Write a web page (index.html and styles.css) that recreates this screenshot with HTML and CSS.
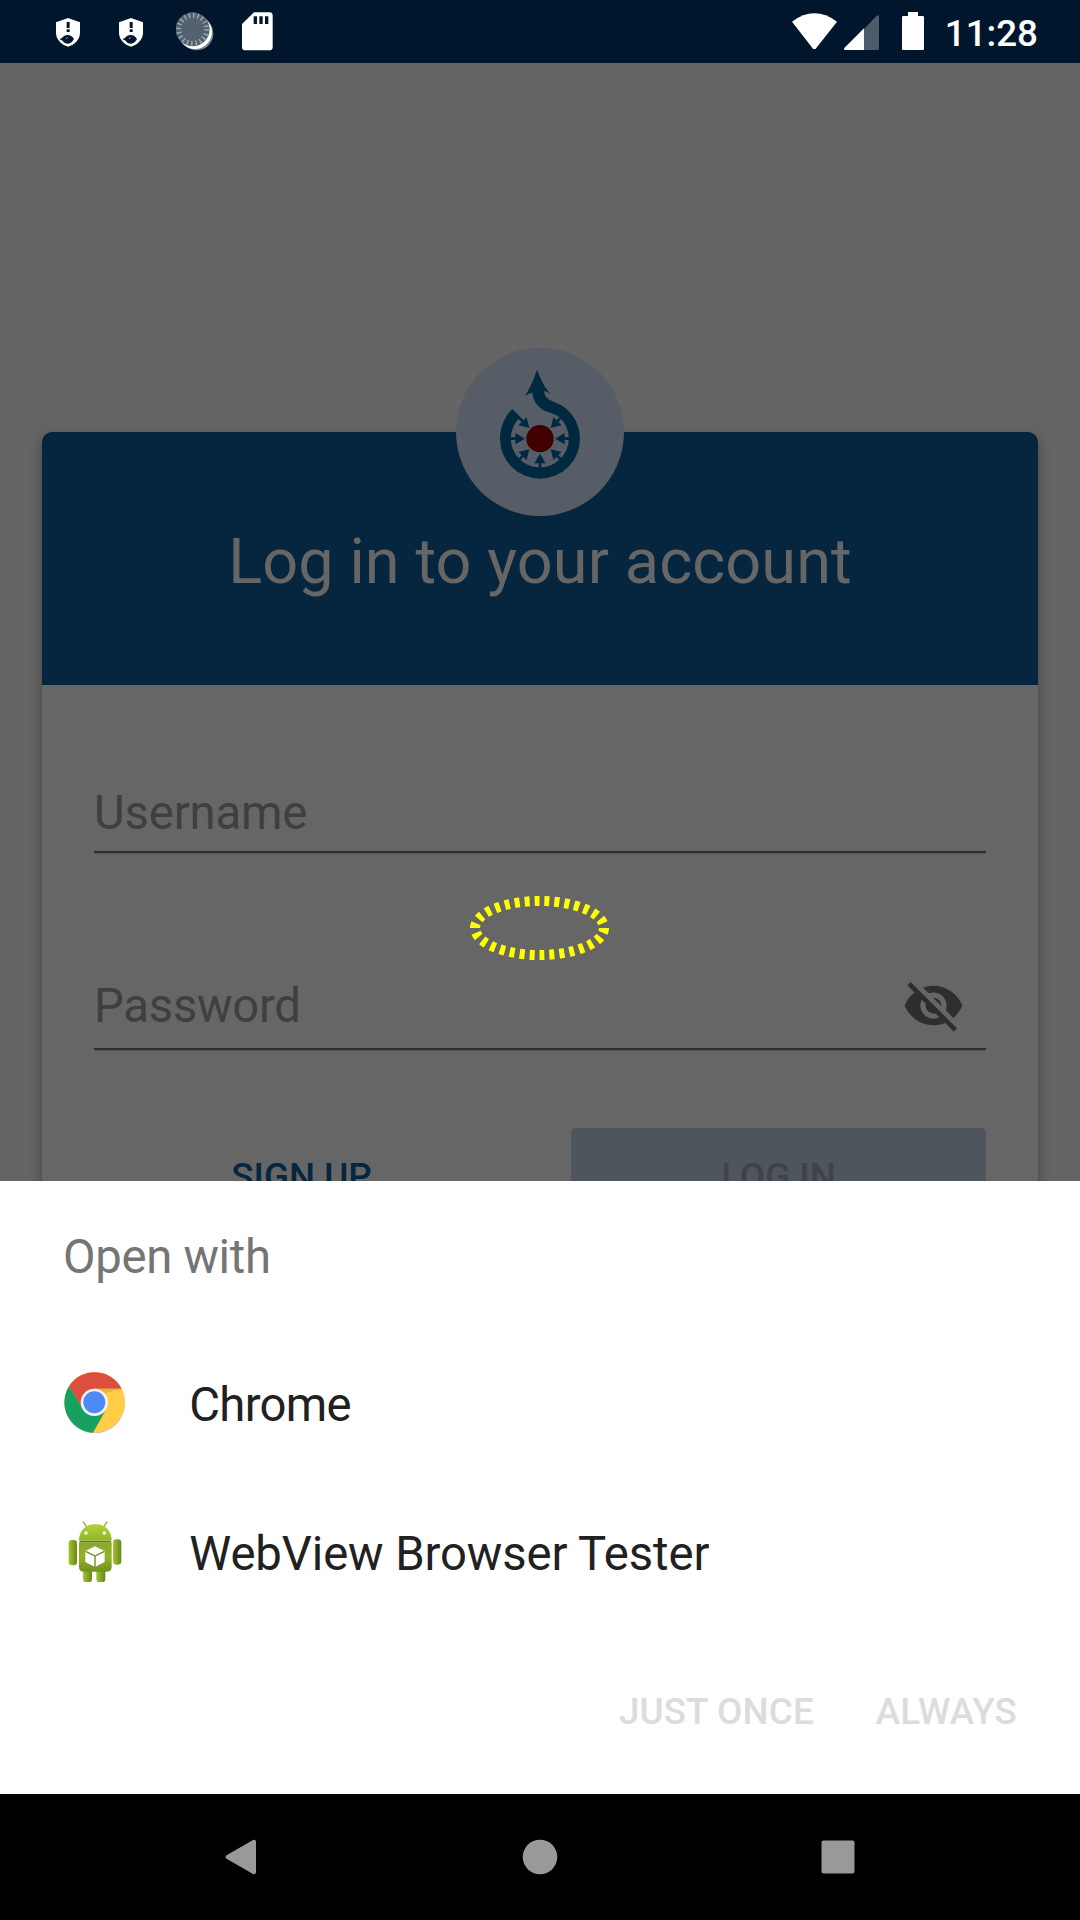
FILE: index.html
```html
<!DOCTYPE html>
<html lang="en">
<head>
<meta charset="utf-8">
<title>Log in</title>
<link rel="stylesheet" href="styles.css">
</head>
<body>
<div class="screen">
  <header class="status">
    <div class="notifications">
      <svg class="shield" viewBox="168 54 72 86"><path fill="#fff" d="M204 54L240 67V98C240 118 224 134 204 140C184 134 168 118 168 98V67Z"/><path fill="#00162c" d="M200 66h9v18h-9zM200 88h9v8h-9zM178 117l8-3c8-12 28-12 36 3-4 8-10 13-18 14-7 0-13-3-16-9z"/><path stroke="#fff" stroke-width="2" d="M198 117l5-5"/></svg>
      <svg class="shield" viewBox="168 54 72 86"><path fill="#fff" d="M204 54L240 67V98C240 118 224 134 204 140C184 134 168 118 168 98V67Z"/><path fill="#00162c" d="M200 66h9v18h-9zM200 88h9v8h-9zM178 117l8-3c8-12 28-12 36 3-4 8-10 13-18 14-7 0-13-3-16-9z"/><path stroke="#fff" stroke-width="2" d="M198 117l5-5"/></svg>
      <svg class="spinner" viewBox="527 36 114 116"><circle cx="589" cy="101" r="50" fill="#7b8793"/><circle cx="584" cy="96" r="51" fill="#fff"/><circle cx="577" cy="88" r="51" fill="#546270"/><circle cx="577" cy="88" r="42" fill="none" stroke="#a3acb5" stroke-width="15" stroke-dasharray="4 9.19"/></svg>
      <svg class="sdcard" viewBox="726 36 92 116"><path fill="#fff" d="M762 37H808Q818 37 818 47V141Q818 151 808 151H736Q726 151 726 141V72Z"/><path fill="#00162c" d="M761 49h10v23h-10zM778 49h10v23h-10zM795 49h10v23h-10z"/></svg>
    </div>
    <div class="system">
      <svg class="wifi" viewBox="95 38 135 110"><path fill="#fff" d="M95 64Q162 14 230 64L166 145Q162 150 158 145Z"/></svg>
      <svg class="signal" viewBox="252 44 105 106"><path fill="#4d5b6b" d="M312 86L350 46Q357 42 357 50V144Q357 150 351 150H312Z"/><path fill="#fff" d="M312 84V150H257Q250 149 253 143Z"/></svg>
      <svg class="battery" viewBox="426 36 66 114"><path fill="#fff" d="M444 36h30v12h14q4 0 4 4v94q0 4-4 4h-58q-4 0-4-4V52q0-4 4-4h14z"/></svg>
      <span class="clock">11:28</span>
    </div>
  </header>

  <main class="stage">
    <section class="card">
      <div class="card-head">
        <div class="badge">
          <svg viewBox="48 54 504 504">
            <defs><path id="arrow" d="M208 322H226V309L255 326L226 343V330H208Z"/></defs>
            <g fill="#00293f">
              <path d="M217 237L241 261A87 87 0 1 0 361 264C350 254 338 252 325 247C298 237 279 216 277 188Q265 189 255 198Q277 162 291 119Q307 165 332 193Q324 184 312 183C313 203 327 210 350 219C393 236 420 280 420 326A120 120 0 0 1 180 326C180 290 194 260 217 237Z"/>
              <use href="#arrow"/>
              <use href="#arrow" transform="rotate(45 300 326)"/>
              <use href="#arrow" transform="rotate(135 300 326)"/>
              <use href="#arrow" transform="rotate(180 300 326)"/>
              <use href="#arrow" transform="rotate(225 300 326)"/>
              <use href="#arrow" transform="rotate(270 300 326)"/>
              <use href="#arrow" transform="rotate(315 300 326)"/>
            </g>
            <circle cx="300" cy="326" r="41" fill="#410000"/>
          </svg>
        </div>
        <h1>Log in to your account</h1>
      </div>
      <div class="card-body">
        <div class="field username"><span>Username</span></div>
        <div class="field password"><span>Password</span>
          <svg class="eye" viewBox="0 0 24 24"><path d="M12 7c2.76 0 5 2.24 5 5 0 .65-.13 1.26-.36 1.83l2.92 2.92c1.51-1.26 2.7-2.89 3.43-4.75-1.73-4.39-6-7.5-11-7.5-1.4 0-2.74.25-3.98.7l2.16 2.16C10.74 7.13 11.35 7 12 7zM2 4.27l2.28 2.28.46.46C3.08 8.3 1.78 10.02 1 12c1.73 4.39 6 7.5 11 7.5 1.55 0 3.03-.3 4.38-.84l.42.42L19.73 22 21 20.73 3.27 3 2 4.27zM7.53 9.8l1.55 1.55c-.05.21-.08.43-.08.65 0 1.66 1.34 3 3 3 .22 0 .44-.03.65-.08l1.55 1.55c-.67.33-1.41.53-2.2.53-2.76 0-5-2.24-5-5 0-.79.2-1.53.53-2.2zm4.31-.78l3.15 3.15.02-.16c0-1.66-1.34-3-3-3l-.17.01z"/></svg>
        </div>
        <div class="actions">
          <span class="signup">SIGN UP</span>
          <span class="login">LOG IN</span>
        </div>
      </div>
    </section>
    <svg class="ring" viewBox="0 0 140 66"><ellipse cx="69.5" cy="33" rx="64.5" ry="27" pathLength="300" fill="none" stroke="#ff0" stroke-width="10" stroke-dasharray="5 5"/></svg>
  </main>

  <section class="sheet">
    <h2>Open with</h2>
    <div class="app">
      <svg class="app-icon" viewBox="72 64 184 184">
        <circle cx="164" cy="157" r="91" fill="#bbb"/>
        <circle cx="164" cy="155" r="91" fill="#ffcd46"/>
        <path fill="#db4e40" d="M87 107A91 91 0 0 1 245 114H164L129 175Z"/>
        <path fill="#17a160" d="M87 107L129 175A41 41 0 0 0 197 179L159 246A91 91 0 0 1 87 107Z"/>
        <path fill="#e9b53c" d="M164 114H242L198 127Z"/>
        <circle cx="163" cy="155" r="41" fill="#f1f1f1"/><circle cx="163" cy="155" r="33" fill="#4c8bf5"/>
      </svg>
      <span class="name-chrome">Chrome</span>
    </div>
    <div class="app">
      <svg class="app-icon" viewBox="72 512 184 184">
        <defs>
          <linearGradient id="head" x2="0" y2="1"><stop stop-color="#b4d435"/><stop offset="1" stop-color="#8fb527"/></linearGradient>
          <linearGradient id="body" x2="0" y2="1"><stop stop-color="#88aa25"/><stop offset=".5" stop-color="#93b22c"/><stop offset="1" stop-color="#6f911f"/></linearGradient>
          <linearGradient id="limb"><stop stop-color="#a4c52f"/><stop offset="1" stop-color="#678619"/></linearGradient>
        </defs>
        <path stroke="#86a92b" stroke-width="4" stroke-linecap="round" d="M130 515l10 15M201 515l-10 15"/>
        <path fill="url(#head)" d="M117 571C117 538 140 521 166 521S215 538 215 571Z"/>
        <circle cx="138" cy="548" r="5" fill="#fff"/><circle cx="193" cy="548" r="5" fill="#fff"/>
        <g fill="url(#limb)"><rect x="129" y="650" width="27" height="46" rx="10"/><rect x="169" y="650" width="27" height="46" rx="10"/><rect x="86" y="569" width="25" height="76" rx="10"/><rect x="219" y="567" width="25" height="76" rx="10"/></g>
        <path fill="url(#body)" d="M117 576H215V650Q215 664 201 664H131Q117 664 117 650Z"/>
        <path stroke="#3f5a10" stroke-width="3" d="M119 574H213"/>
        <path fill="#fff" d="M165 588L194 602V635L165 650L136 635V602Z"/><path fill="none" stroke="#6b8a20" stroke-width="4" d="M137 603L165 617L193 603M165 617V650"/>
      </svg>
      <span class="name-webview">WebView Browser Tester</span>
    </div>
    <div class="sheet-actions"><span>JUST ONCE</span><span>ALWAYS</span></div>
  </section>

  <nav class="navbar">
    <svg viewBox="0 0 36 36"><path d="M4 16L30 1Q33 0 33 3V33Q33 36 30 35L4 20Q1 18 4 16Z"/></svg>
    <svg viewBox="0 0 36 36"><circle cx="18" cy="18" r="17.3"/></svg>
    <svg viewBox="0 0 36 36"><rect x="1.5" y="1.5" width="33" height="33" rx="2"/></svg>
  </nav>
</div>
</body>
</html>
```
FILE: styles.css
```css
* { box-sizing: border-box; }
body { margin: 0; font-family: Roboto, "Liberation Sans", sans-serif; }
svg { display: block; flex: none; }
h1, h2 { margin: 0; font-weight: 400; }
.screen { width: 1080px; height: 1920px; display: flex; flex-direction: column; overflow: hidden; }

.status { height: 63px; flex: none; background: #00162c; display: flex; justify-content: space-between; align-items: flex-start; padding: 12px 42px 0 56px; }
.notifications { display: flex; align-items: flex-start; }
.shield { width: 24px; height: 28.7px; margin: 6px 39px 0 0; }
.spinner { width: 38px; height: 38.7px; margin-right: 28px; margin-left: -6px; }
.sdcard { width: 30.7px; height: 38.7px; }
.system { display: flex; align-items: flex-start; }
.wifi { width: 45px; height: 36.7px; margin-top: 0.7px; }
.signal { width: 35px; height: 35.3px; margin: 2.7px 0 0 7.3px; }
.battery { width: 22px; height: 38px; margin-left: 23px; }
.clock { margin-left: 20.5px; color: #fff; font-size: 36.75px; font-weight: 500; line-height: 43px; }

.stage { position: relative; height: 1118px; flex: none; overflow: hidden; background: #656565; padding: 369px 42px 0; }
.card { height: 900px; background: #666; border-radius: 10px; box-shadow: 0 5px 14px rgba(0, 0, 0, .35); }
.card-head { height: 253px; background: #06263f; border-radius: 10px 10px 0 0; display: flex; flex-direction: column; align-items: center; }
.badge { width: 168px; height: 168px; flex: none; margin-top: -84px; border-radius: 50%; background: #565d66; }
h1 { color: #666; font-size: 63px; line-height: 74px; margin-top: 9px; letter-spacing: 0.1px; }
.card-body { padding: 0 52px; }
.field { display: flex; justify-content: space-between; align-items: flex-end; border-bottom: 2px solid #2e2e2e; box-shadow: 0 1px 0 #575757; color: #3f3f3f; font-size: 47.25px; line-height: 56px; }
.username { height: 168px; padding-bottom: 10px; letter-spacing: -0.15px; }
.password { height: 197px; padding-bottom: 14px; letter-spacing: -0.25px; }
.eye { width: 63px; height: 63px; margin: 0 21px -3px 0; fill: #2e2e2e; }
.actions { display: flex; margin-top: 78px; font-size: 36.75px; font-weight: 500; }
.signup, .login { flex: 1; height: 95px; line-height: 97px; text-align: center; }
.signup { color: #06263f; margin-right: 62px; }
.login { flex: none; width: 415px; background: #4e555c; color: #3d4349; border-radius: 5px; }
.ring { position: absolute; left: 470px; top: 832px; width: 140px; height: 66px; }

.sheet { height: 613px; flex: none; background: #fff; padding: 48px 63px 0; display: flex; flex-direction: column; }
h2 { color: #757575; font-size: 47.25px; line-height: 56px; margin-bottom: 45px; letter-spacing: -0.3px; }
.app { display: flex; align-items: center; height: 149px; gap: 64px; color: #212121; font-size: 47.25px; }
.app-icon { width: 61.3px; height: 61.3px; margin: 0 0 4px 1px; }
.name-chrome { letter-spacing: -0.7px; }
.name-webview { letter-spacing: -0.1px; }
.sheet-actions { display: flex; justify-content: flex-end; gap: 62px; color: #dcdcdc; font-size: 36.75px; font-weight: 500; line-height: 44px; letter-spacing: 0.15px; margin-top: 62px; }

.navbar { height: 126px; flex: none; background: #000; display: flex; align-items: center; justify-content: space-between; padding: 0 224px 1px 223px; }
.navbar svg { width: 36px; height: 36px; fill: #999; }
```
